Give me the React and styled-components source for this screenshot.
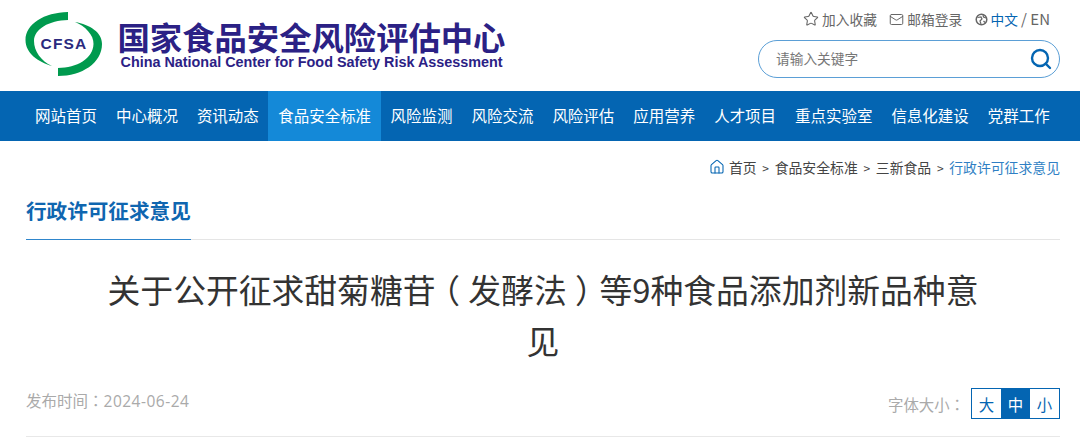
import React from "react";
import styled, { createGlobalStyle } from "styled-components";
import { Star, Mail, Search, Home } from "lucide-react";

const FONT = `"Noto Sans CJK SC", "Noto Sans", sans-serif`;

const GlobalStyle = createGlobalStyle`
  html, body {
    margin: 0;
    padding: 0;
    background: #fff;
    font-family: ${FONT};
    overflow: hidden;
  }
`;

const Page = styled.div`
  width: 1080px;
  height: 444px;
  overflow: hidden;
`;

const Header = styled.header`
  height: 91px;
  display: flex;
  justify-content: space-between;
  padding: 0 20px 0 25px;
`;

const Brand = styled.div`
  display: flex;
  align-items: flex-start;
  gap: 14.5px;
  padding-top: 11px;
`;

const BrandText = styled.div`
  display: flex;
  flex-direction: column;
  color: #2b2185;
`;

const BrandCn = styled.div`
  font-size: 32.35px;
  line-height: 37px;
  font-weight: 700;
  white-space: nowrap;
  margin-top: 6px;
`;

const BrandEn = styled.div`
  font-family: "Liberation Sans", sans-serif;
  font-size: 14.38px;
  line-height: 17px;
  font-weight: 700;
  white-space: nowrap;
  margin-left: 3px;
`;

const Tools = styled.div`
  display: flex;
  flex-direction: column;
  align-items: flex-end;
  padding-top: 9px;
`;

const ToolLinks = styled.div`
  display: flex;
  align-items: center;
  gap: 12.5px;
  padding-right: 10px;
  font-size: 13.7px;
  line-height: 20px;
  color: #666;
  white-space: nowrap;
`;

const ToolLink = styled.span`
  display: inline-flex;
  align-items: center;
  gap: 3px;
`;

const Lang = styled.span`
  color: #0465b2;
`;

const LangAlt = styled.span`
  font-size: 15px;
`;

const SearchBox = styled.div`
  width: 302px;
  height: 38px;
  box-sizing: border-box;
  margin-top: 11px;
  border: 1px solid #5b9fd6;
  border-radius: 19px;
  padding: 0 6px 0 17px;
  display: flex;
  align-items: center;
  justify-content: space-between;
  font-size: 13.7px;
  color: #777;
`;

const Placeholder = styled.span`
  margin-top: -2px;
`;

const Nav = styled.nav`
  height: 50px;
  background: #0465b2;
  display: flex;
  padding-left: 25.6px;
`;

const NavItem = styled.a`
  box-sizing: border-box;
  padding: 0 ${(p) => (p.$active ? "10px" : "9.5px")} 2px;
  display: flex;
  align-items: center;
  font-size: 15.48px;
  color: #fff;
  white-space: nowrap;
  background: ${(p) => (p.$active ? "#1489d8" : "transparent")};
`;

const Main = styled.main`
  padding: 0 20px 0 26px;
`;

const Crumbs = styled.div`
  height: 52px;
  display: flex;
  align-items: center;
  justify-content: flex-end;
  font-size: 13.85px;
  color: #444;
  white-space: nowrap;
`;

const Crumb = styled.span`
  color: ${(p) => (p.$current ? "#2f7fc4" : "#444")};
  display: inline-flex;
  align-items: center;
  gap: 4px;
`;

const Sep = styled.span`
  margin: 0 5.7px;
  font-size: 12px;
`;

const SectionBar = styled.div`
  height: 46px;
  border-bottom: 1px solid #e5e5e5;
  display: flex;
`;

const SectionTitle = styled.h2`
  margin: 0;
  width: 165px;
  height: 47px;
  box-sizing: border-box;
  border-bottom: 1px solid #2f86cc;
  font-size: 20.6px;
  line-height: 34px;
  font-weight: 700;
  color: #0f66b0;
  white-space: nowrap;
`;

const Title = styled.h1`
  width: 890px;
  margin: 23px auto 0;
  font-size: 32.8px;
  line-height: 51px;
  font-weight: 400;
  text-align: center;
  color: #333;
`;

/* the reference centres the brackets inside their em box */
const Paren = styled.span`
  display: inline-block;
  font-feature-settings: "halt";
  padding: 0 0.25em;
`;

/* a centred full-width colon, as the Traditional Chinese glyphs have it */
const Colon = styled.span`
  font-family: "Noto Sans CJK TC", sans-serif;
`;

const MetaRow = styled.div`
  margin-top: 23px;
  height: 48px;
  border-bottom: 1px solid #e8e8e8;
  display: flex;
  justify-content: space-between;
  align-items: flex-start;
`;

const PublishDate = styled.div`
  font-size: 15.5px;
  line-height: 24px;
  color: #aaa;
`;

const DateValue = styled.span`
  font-family: "Open Sans", sans-serif;
  letter-spacing: 0.5px;
`;

const SizeControl = styled.div`
  display: flex;
  align-items: center;
  font-size: 15.4px;
  color: #aaa;
`;

const SizeGroup = styled.div`
  display: flex;
  margin-left: 6px;
  border: 1px solid #0465b2;
`;

const SizeButton = styled.span`
  width: 29px;
  height: 29px;
  display: flex;
  align-items: center;
  justify-content: center;
  font-size: 15.4px;
  color: ${(p) => (p.$active ? "#fff" : "#0465b2")};
  background: ${(p) => (p.$active ? "#0465b2" : "#fff")};
`;

const navItems = [
  "网站首页",
  "中心概况",
  "资讯动态",
  "食品安全标准",
  "风险监测",
  "风险交流",
  "风险评估",
  "应用营养",
  "人才项目",
  "重点实验室",
  "信息化建设",
  "党群工作",
];

const Logo = () => (
  <svg width="78" height="66" viewBox="0 0 78 66">
    <path
      fill="#009a4e"
      d="M43 1 C19 1.5 0.5 13 0.5 29 C0.5 42 13 51 27 55 C16 50 9 40 9 30 C9 18 24 9.5 43 9 Z"
    />
    <path
      fill="#009a4e"
      d="M50 11 C65 14 77 21 77 33 C77 52 57 65 33 65 L33 57 C52 56.5 68 48 68.5 33 C69 24 60 15 50 11 Z"
    />
    <text
      x="39"
      y="37.5"
      textAnchor="middle"
      fontFamily="Liberation Sans, sans-serif"
      fontWeight="700"
      fontSize="15.5"
      letterSpacing="1.2"
      fill="#2b2a7e"
    >
      CFSA
    </text>
  </svg>
);

const GlobeIcon = () => (
  <svg width="13" height="13" viewBox="0 0 13 13" fill="none" stroke="#666" strokeWidth="1.5">
    <circle cx="6.5" cy="6.5" r="5.3" />
    <path d="M2.5 4.5 L6 4 L7 6 L5 8 L6 11 M8 2 L8.5 4 L11 5 M8.5 8 L10 9.5" strokeWidth="1.2" />
  </svg>
);

export default function App() {
  return (
    <Page>
      <GlobalStyle />
      <Header>
        <Brand>
          <Logo />
          <BrandText>
            <BrandCn>国家食品安全风险评估中心</BrandCn>
            <BrandEn>China National Center for Food Safety Risk Assessment</BrandEn>
          </BrandText>
        </Brand>
        <Tools>
          <ToolLinks>
            <ToolLink>
              <Star size={16} strokeWidth={1.6} />
              加入收藏
            </ToolLink>
            <ToolLink>
              <Mail size={15} strokeWidth={1.6} />
              邮箱登录
            </ToolLink>
            <ToolLink>
              <GlobeIcon />
              <span>
                <Lang>中文</Lang> <LangAlt>/ EN</LangAlt>
              </span>
            </ToolLink>
          </ToolLinks>
          <SearchBox>
            <Placeholder>请输入关键字</Placeholder>
            <Search size={24} strokeWidth={2.4} color="#0465b2" />
          </SearchBox>
        </Tools>
      </Header>
      <Nav>
        {navItems.map((item) => (
          <NavItem key={item} $active={item === "食品安全标准"}>
            {item}
          </NavItem>
        ))}
      </Nav>
      <Main>
        <Crumbs>
          <Crumb>
            <Home size={16} strokeWidth={1.6} color="#0465b2" />
            首页
          </Crumb>
          <Sep>&gt;</Sep>
          <Crumb>食品安全标准</Crumb>
          <Sep>&gt;</Sep>
          <Crumb>三新食品</Crumb>
          <Sep>&gt;</Sep>
          <Crumb $current>行政许可征求意见</Crumb>
        </Crumbs>
        <SectionBar>
          <SectionTitle>行政许可征求意见</SectionTitle>
        </SectionBar>
        <Title>
          关于公开征求甜菊糖苷<Paren>（</Paren>发酵法<Paren>）</Paren>等9种食品添加剂新品种意见
        </Title>
        <MetaRow>
          <PublishDate>
            发布时间<Colon>：</Colon>
            <DateValue>2024-06-24</DateValue>
          </PublishDate>
          <SizeControl>
            字体大小<Colon>：</Colon>
            <SizeGroup>
              <SizeButton>大</SizeButton>
              <SizeButton $active>中</SizeButton>
              <SizeButton>小</SizeButton>
            </SizeGroup>
          </SizeControl>
        </MetaRow>
      </Main>
    </Page>
  );
}
